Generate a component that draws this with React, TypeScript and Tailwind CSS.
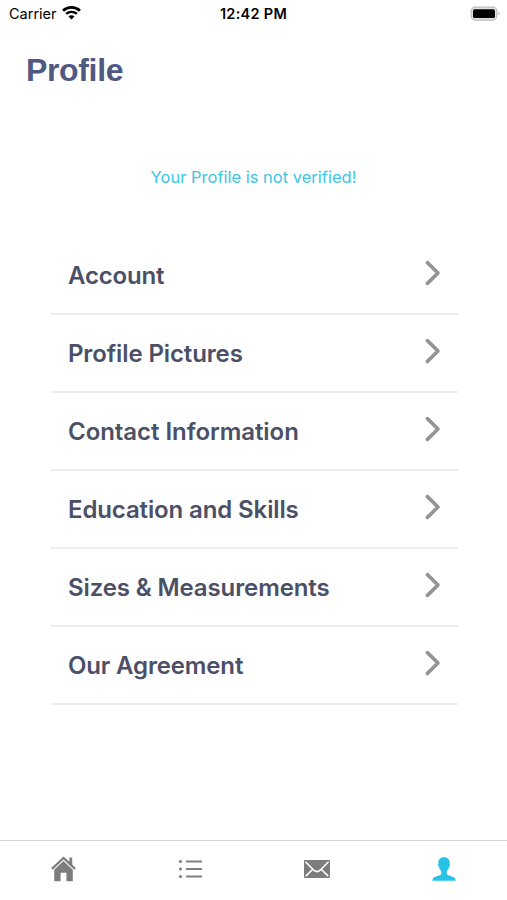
const MENU = [
  { label: "Account", tracking: "tracking-[-0.18px]" },
  { label: "Profile Pictures", tracking: "tracking-[-0.12px]" },
  { label: "Contact Information", tracking: "tracking-[-0.05px]" },
  { label: "Education and Skills", tracking: "tracking-[-0.12px]" },
  { label: "Sizes & Measurements", tracking: "tracking-[-0.11px]" },
  { label: "Our Agreement", tracking: "tracking-[-0.15px]" },
];

function WifiIcon() {
  return (
    <svg width="19" height="14" viewBox="0 0 18 14" fill="none" stroke="#000" preserveAspectRatio="none">
      <path d="M1 4.7a11.4 11.4 0 0 1 16 0" strokeWidth="2.6" />
      <path d="M3.9 7.9a7.2 7.2 0 0 1 10.2 0" strokeWidth="2.3" />
      <path d="M9 13.4 6.2 10.4a3.9 3.9 0 0 1 5.6 0Z" fill="#000" stroke="none" />
    </svg>
  );
}

function BatteryIcon() {
  return (
    <svg width="31" height="16" viewBox="0 0 31 16">
      <rect x="1.2" y="1.2" width="25.6" height="12.8" rx="4" fill="#e4e4e4" stroke="#bdbdbd" strokeWidth="1.3" />
      <rect x="3" y="3.2" width="22" height="8.8" rx="1.6" fill="#000" />
      <path d="M28.4 5.5c2 .9 2 3.1 0 4Z" fill="#b8b8b8" />
    </svg>
  );
}

function ChevronIcon() {
  return (
    <svg width="18" height="28" viewBox="0 0 18 28" fill="none">
      <path d="M3.4 3.6 14 14 3.4 24.4" stroke="#949494" strokeWidth="3.6" strokeLinecap="round" strokeLinejoin="round" />
    </svg>
  );
}

function HomeIcon() {
  return (
    <svg width="28" height="28" viewBox="0 0 28 28" fill="#7d7d7d">
      <path d="M13.500 1.400 1.200 13l1.500 1.700 10.800-10.100 10.800 10.100 1.500-1.700-3.600-3.400V2.600h-2.800v4.100Z" />
      <path d="M13.500 6 4.200 14.700V26.200h6.400v-8.400h5.800v8.400h6.400V14.700Z" />
    </svg>
  );
}

function ListIcon() {
  return (
    <svg width="26" height="20" viewBox="0 0 26 20" fill="#808080">
      {[2.5, 10, 17.5].map((y) => (
        <g key={y}>
          <circle cx="2.5" cy={y} r="1.6" />
          <rect x="7.8" y={y - 0.9} width="16.4" height="1.8" rx="0.9" />
        </g>
      ))}
    </svg>
  );
}

function MailIcon() {
  return (
    <svg width="26" height="18" viewBox="0 0 26 18">
      <rect width="26" height="18" rx="1" fill="#7d7d7d" />
      <path
        d="M2 2.2 9.8 10.2Q13 13 16.2 10.2L24 2.2M2.200 15.600 8.600 9.500M23.800 15.600 17.400 9.500"
        fill="none"
        stroke="#fff"
        strokeWidth="1.6"
        strokeLinecap="round"
      />
    </svg>
  );
}

function UserIcon() {
  return (
    <svg width="24" height="24" viewBox="0 0 24 24" fill="#27c2e7">
      <path d="M12 .3c-3.9 0-5.9 2.4-5.6 6.1-.7.5-.4 2.7.5 3.4.4 2.2 1.5 3.4 2.3 4.2v3.3c-.5 1.6-6.8 1.7-8.2 4-.4.7-.6 1.5-.7 2.4h23.4c-.1-.9-.3-1.7-.7-2.4-1.4-2.3-7.7-2.4-8.2-4V14c.8-.8 1.9-2 2.3-4.2.9-.7 1.2-2.9.5-3.4C17.9 2.7 15.9.3 12 .3Z" />
    </svg>
  );
}

export default function App() {
  return (
    <div className="flex h-[900px] w-[507px] flex-col overflow-hidden bg-white font-['Inter',sans-serif]">
      {/* Status bar */}
      <div className="grid h-7 shrink-0 grid-cols-3 items-center pr-[6px] pl-[9px] text-black">
        <div className="flex items-center gap-[5px] text-[14.5px]">
          <span>Carrier</span>
          <span className="-mt-[2px]">
            <WifiIcon />
          </span>
        </div>
        <div className="pr-[3px] text-center text-[14.5px] font-semibold tracking-[0.28px]">12:42 PM</div>
        <div className="flex justify-end">
          <BatteryIcon />
        </div>
      </div>

      <h1 className="mt-[24px] ml-[26px] h-9 font-['Liberation_Sans',sans-serif] text-[32px] leading-9 font-bold tracking-[-0.35px] text-[#50597f]">
        Profile
      </h1>

      <p className="mt-[77px] text-center text-[16.5px] leading-6 text-[#3cc6e4]">
        Your Profile is not verified!
      </p>

      <ul className="mt-[48px] mr-[49px] ml-[50px]">
        {MENU.map((item) => (
          <li
            key={item.label}
            className="flex h-[78px] items-center justify-between border-b-2 border-[#eeeeee] pr-[16px] pl-[18px]"
          >
            <span className={`pt-[2px] text-[24px] leading-8 font-semibold text-[#4b5066] ${item.tracking}`}>
              {item.label}
            </span>
            <span className="mb-1">
              <ChevronIcon />
            </span>
          </li>
        ))}
      </ul>

      {/* Tab bar */}
      <nav className="mt-auto grid h-[60px] grid-cols-4 border-t border-[#d4d4d4]">
        <button className="flex h-[56px] items-center justify-center pl-[2px]">
          <HomeIcon />
        </button>
        <button className="flex h-[56px] items-center justify-center pl-[2px]">
          <ListIcon />
        </button>
        <button className="flex h-[56px] items-center justify-center">
          <MailIcon />
        </button>
        <button className="flex h-[56px] items-center justify-center">
          <UserIcon />
        </button>
      </nav>
    </div>
  );
}
